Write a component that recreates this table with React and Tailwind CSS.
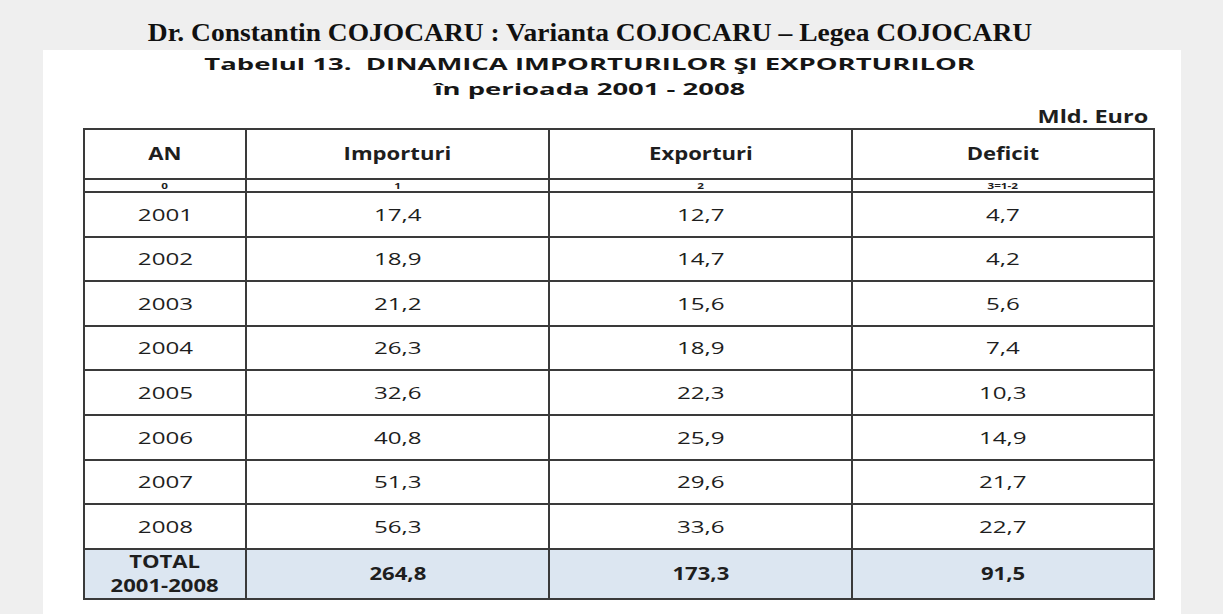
import React from "react";

const rows = [
  ["2001", "17,4", "12,7", "4,7"],
  ["2002", "18,9", "14,7", "4,2"],
  ["2003", "21,2", "15,6", "5,6"],
  ["2004", "26,3", "18,9", "7,4"],
  ["2005", "32,6", "22,3", "10,3"],
  ["2006", "40,8", "25,9", "14,9"],
  ["2007", "51,3", "29,6", "21,7"],
  ["2008", "56,3", "33,6", "22,7"],
];

// the scan is stretched sideways, so text gets widened with a scale-x class
function Wide({ children, s = "scale-x-[1.3]", className = "" }) {
  return <span className={`inline-block ${s} ${className}`}>{children}</span>;
}

export default function App() {
  const cell = "border-2 border-[#3a3a3a] text-center align-middle p-0";

  return (
    <div className="w-full h-[614px] bg-[#efefef] overflow-hidden flex flex-col">
      {/* Header line */}
      <div className="h-[50px] flex items-center justify-center pr-[44px]">
        <h1 className="font-['Liberation_Serif',serif] font-bold text-[25px] text-[#111] leading-none pt-[14px]">
          <Wide s="scale-x-[1.1]">Dr. Constantin COJOCARU : Varianta COJOCARU – Legea COJOCARU</Wide>
        </h1>
      </div>

      {/* Page */}
      <div className="ml-[43px] w-[1138px] flex-1 bg-white font-['Open_Sans',sans-serif] text-[#1e1e1e]">
        <div className="flex flex-col items-center pr-[44px] pt-[2px] font-bold text-[16px] leading-[25px] text-[#161616]">
          <Wide s="scale-x-[1.715]" className="whitespace-pre">Tabelul 13.  DINAMICA IMPORTURILOR ŞI EXPORTURILOR</Wide>
          <Wide s="scale-x-[1.715]">în perioada 2001 - 2008</Wide>
        </div>

        <div className="w-[1070px] ml-[40px] flex justify-end font-bold text-[17px] leading-[23px] pr-[5px] pt-[3px]">
          <Wide s="scale-x-[1.38]" className="origin-right">Mld. Euro</Wide>
        </div>

        <table className="ml-[40px] w-[1070px] table-fixed border-collapse text-[17px]">
          <colgroup>
            <col className="w-[162px]" />
            <col className="w-[303px]" />
            <col className="w-[303px]" />
            <col className="w-[302px]" />
          </colgroup>
          <thead>
            <tr className="h-[50px] font-bold">
              <th className={cell}><Wide>AN</Wide></th>
              <th className={cell}><Wide>Importuri</Wide></th>
              <th className={cell}><Wide>Exporturi</Wide></th>
              <th className={cell}><Wide>Deficit</Wide></th>
            </tr>
            <tr className="h-[13px] text-[9px] leading-none font-bold">
              <th className={cell}><Wide>0</Wide></th>
              <th className={cell}><Wide>1</Wide></th>
              <th className={cell}><Wide>2</Wide></th>
              <th className={cell}><Wide>3=1-2</Wide></th>
            </tr>
          </thead>
          <tbody>
            {rows.map((r) => (
              <tr key={r[0]} className="h-[44.6px]">
                {r.map((v, i) => (
                  <td key={i} className={cell}><Wide s="scale-x-[1.42]">{v}</Wide></td>
                ))}
              </tr>
            ))}
            <tr className="h-[49px] bg-[#dce6f1] font-bold">
              <td className={`${cell} leading-[24px]`}>
                <Wide>TOTAL<br />2001-2008</Wide>
              </td>
              <td className={cell}><Wide>264,8</Wide></td>
              <td className={cell}><Wide>173,3</Wide></td>
              <td className={cell}><Wide>91,5</Wide></td>
            </tr>
          </tbody>
        </table>
      </div>
    </div>
  );
}
